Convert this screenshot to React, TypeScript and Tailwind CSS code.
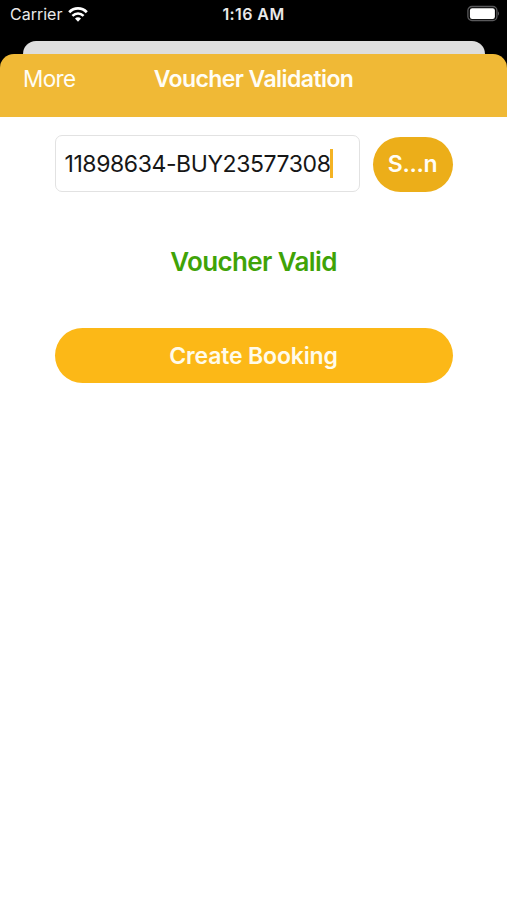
function StatusBar() {
  return (
    <div className="grid h-[41px] grid-cols-3 items-start px-2.5 pt-[5px] text-[16px] leading-5 text-[#e9e9e9]">
      <div className="flex items-start">
        <span className="w-[58px] leading-[19px]">Carrier</span>
        <svg className="mt-[1px]" width="20" height="16" viewBox="0 0 20 16" fill="none" stroke="#fff" strokeWidth="2.8">
          <path d="M1.2 6.2C6.2 1.2 13.8 1.2 18.8 6.2" />
          <path d="M4.4 9.9C7.7 6.8 12.3 6.8 15.6 9.9" strokeWidth="2.6" />
          <path d="M10 15.8L7 12.5C8.7 10.9 11.3 10.9 13 12.5Z" fill="#fff" stroke="none" />
        </svg>
      </div>
      <span className="text-center leading-[19px] font-semibold tracking-[0.4px]">1:16 AM</span>
      <svg className="-mr-[2px] justify-self-end" width="32" height="17" viewBox="0 0 32 17" fill="none">
        <rect x="0.9" y="1.5" width="29" height="14" rx="4" stroke="#59595b" strokeWidth="1.3" />
        <rect x="2.9" y="3.3" width="25" height="10.6" rx="2.2" fill="#fff" />
        <path d="M31 6.5C32.3 7.2 32.3 9.8 31 10.5Z" fill="#59595b" />
      </svg>
    </div>
  );
}

function NavBar() {
  return (
    <header className="grid h-[63px] grid-cols-[1fr_auto_1fr] items-start rounded-t-[14px] bg-[#f0b936] px-[23px] pt-[11px] text-[23px] leading-7 text-[#fffdf5]">
      <button className="text-left text-[22.5px] tracking-[-0.6px]">More</button>
      <h1 className="font-semibold tracking-[-0.57px]">Voucher Validation</h1>
    </header>
  );
}

export default function App() {
  return (
    <div className="flex h-[900px] w-[507px] flex-col overflow-hidden bg-white font-['Inter','Liberation_Sans',sans-serif]">
      <div className="bg-black">
        <StatusBar />
        <div className="mx-[22.5px] h-[13px] rounded-t-[13px] bg-[#dedede]" />
        <NavBar />
      </div>
      <main className="flex flex-col px-[54.5px] pt-[18px]">
        <div className="flex items-center justify-between">
          <div className="flex h-[57px] w-[305px] items-center rounded-[7px] border border-[#e2e2e2] pl-[9px] text-[23px] text-[#161616]">
            <span className="pt-[2px] tracking-[-0.42px]">11898634-BUY23577308</span>
            <span className="h-[29px] w-[2.5px] bg-[#f4b324]" />
          </div>
          <button className="mt-[1px] h-[55px] w-20 rounded-full bg-[#ecae19] pt-px text-[23px] font-semibold tracking-[-0.3px] text-[#fffdf5]">
            S...n
          </button>
        </div>
        <p className="mt-[53px] text-center text-[26px] leading-[34px] font-semibold tracking-[-0.62px] text-[#3fa307]">
          Voucher Valid
        </p>
        <button className="mt-[49px] h-[55px] rounded-full bg-[#fcb817] pt-px text-[23px] font-semibold tracking-[-0.15px] text-[#fffbea]">
          Create Booking
        </button>
      </main>
    </div>
  );
}
